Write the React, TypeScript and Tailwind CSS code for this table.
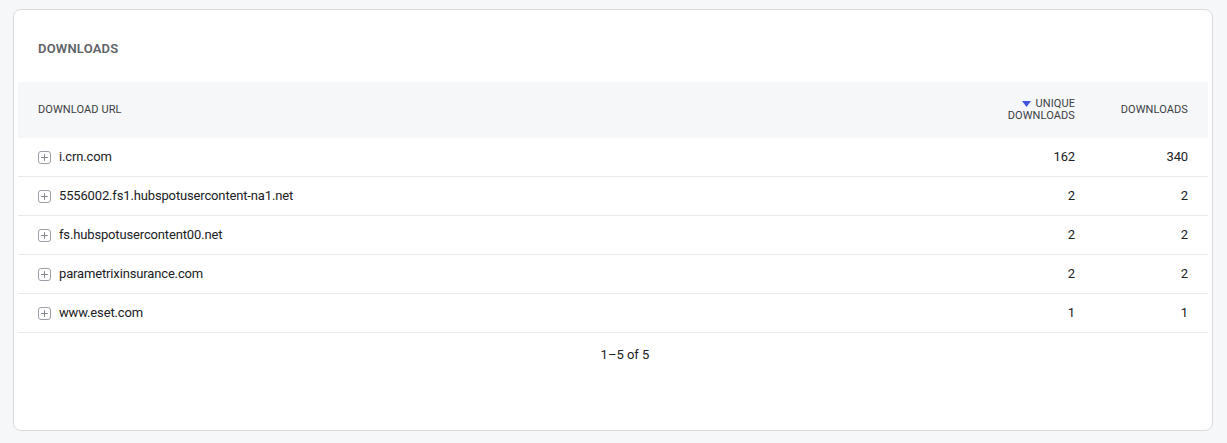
import React from "react";

const rows = [
  { url: "i.crn.com", unique: "162", downloads: "340" },
  { url: "5556002.fs1.hubspotusercontent-na1.net", unique: "2", downloads: "2" },
  { url: "fs.hubspotusercontent00.net", unique: "2", downloads: "2" },
  { url: "parametrixinsurance.com", unique: "2", downloads: "2" },
  { url: "www.eset.com", unique: "1", downloads: "1" },
];

function PlusBox() {
  return (
    <svg width="13" height="13" viewBox="0 0 13 13" className="shrink-0">
      <rect x="0.5" y="0.5" width="12" height="12" rx="2.5" fill="none" stroke="#9aa0a6" strokeWidth="1" />
      <path d="M6.5 3.2v6.6M3.2 6.5h6.6" stroke="#80868b" strokeWidth="1" />
    </svg>
  );
}

export default function App() {
  return (
    <div
      className="w-[1227px] h-[443px] bg-[#f6f7f9] pt-[9px] pl-[13px]"
      style={{ fontFamily: "Roboto, 'Noto Sans', sans-serif" }}
    >
      <div className="w-[1200px] h-[422px] bg-white border border-[#d9dadd] rounded-[8px] px-[4px]">
        <div className="h-[72px] pt-[31px] pl-[20px] text-[13px] leading-[16px] font-semibold tracking-[0.2px] text-[#5f6368]">
          DOWNLOADS
        </div>
        <div className="flex h-[56px] bg-[#f6f7f9] items-center text-[11px] tracking-[0.1px] text-[#3c4043] leading-[12px]">
          <div className="flex-1 pl-[20px]">DOWNLOAD URL</div>
          <div className="w-[120px] pr-[11px] text-right flex flex-col items-end">
            <div className="flex items-center gap-[4px]">
              <svg width="9" height="6" viewBox="0 0 9 6">
                <path d="M0 0h9L4.5 6z" fill="#4355e0" />
              </svg>
              <span>UNIQUE</span>
            </div>
            <span>DOWNLOADS</span>
          </div>
          <div className="w-[122px] pr-[20px] text-right">DOWNLOADS</div>
        </div>
        {rows.map((r) => (
          <div
            key={r.url}
            className="flex h-[39px] items-center border-b border-[#e8eaed] text-[13px] tracking-[-0.15px] text-[#202124]"
          >
            <div className="flex-1 pl-[20px] flex items-center gap-[8px]">
              <PlusBox />
              <span>{r.url}</span>
            </div>
            <div className="w-[120px] pr-[11px] text-right">{r.unique}</div>
            <div className="w-[122px] pr-[20px] text-right">{r.downloads}</div>
          </div>
        ))}
        <div className="pt-[13px] pl-[24px] text-center text-[13px] text-[#202124] leading-[18px]">1–5 of 5</div>
      </div>
    </div>
  );
}
